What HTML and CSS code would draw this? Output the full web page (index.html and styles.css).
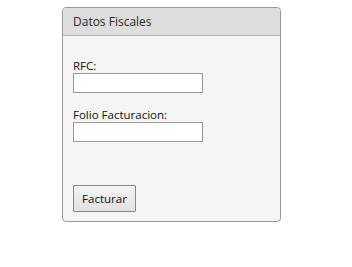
FILE: index.html
```html
<!DOCTYPE html>
<html>
<head>
<meta charset="utf-8">
<link rel="stylesheet" href="styles.css">
</head>
<body>
<div class="panel">
  <div class="panel-header">Datos Fiscales</div>
  <div class="panel-body">
    <label class="field-label">RFC:</label>
    <input class="field-input" type="text">
    <label class="field-label second">Folio Facturacion:</label>
    <input class="field-input" type="text">
    <button class="btn">Facturar</button>
  </div>
</div>
</body>
</html>
```

FILE: styles.css
```css
html, body {
  margin: 0;
  padding: 0;
  background: #fff;
}
body {
  padding: 7px 0 0 62px;
  font-family: "Open Sans", "DejaVu Sans", sans-serif;
  font-size: 11.5px;
  color: #111;
}
.panel {
  width: 217px;
  border: 1px solid #999;
  border-radius: 4px;
  background: #f5f5f5;
  overflow: hidden;
}
.panel-header {
  height: 27px;
  line-height: 27px;
  background: #dddddd;
  border-bottom: 1px solid #b5b5b5;
  padding-left: 10px;
  color: #2a2a2a;
  font-size: 12px;
}
.panel-body {
  display: flex;
  flex-direction: column;
  align-items: flex-start;
  padding: 23px 10px 9px 10px;
}
.field-label {
  display: block;
  height: 14px;
  line-height: 14px;
  color: #111;
}
.field-label.second {
  margin-top: 15px;
}
.field-input {
  box-sizing: border-box;
  width: 130px;
  height: 20px;
  margin: 0;
  border: 1px solid #999;
  background: #fff;
  padding: 0 2px;
}
.btn {
  box-sizing: border-box;
  margin-top: 43px;
  width: 63px;
  height: 27px;
  border: 1px solid #8a8a8a;
  border-radius: 1px;
  background: linear-gradient(#f4f4f4, #e2e2e2);
  font-family: "Open Sans", "DejaVu Sans", sans-serif;
  font-size: 11.5px;
  color: #111;
  padding: 0;
}
```
